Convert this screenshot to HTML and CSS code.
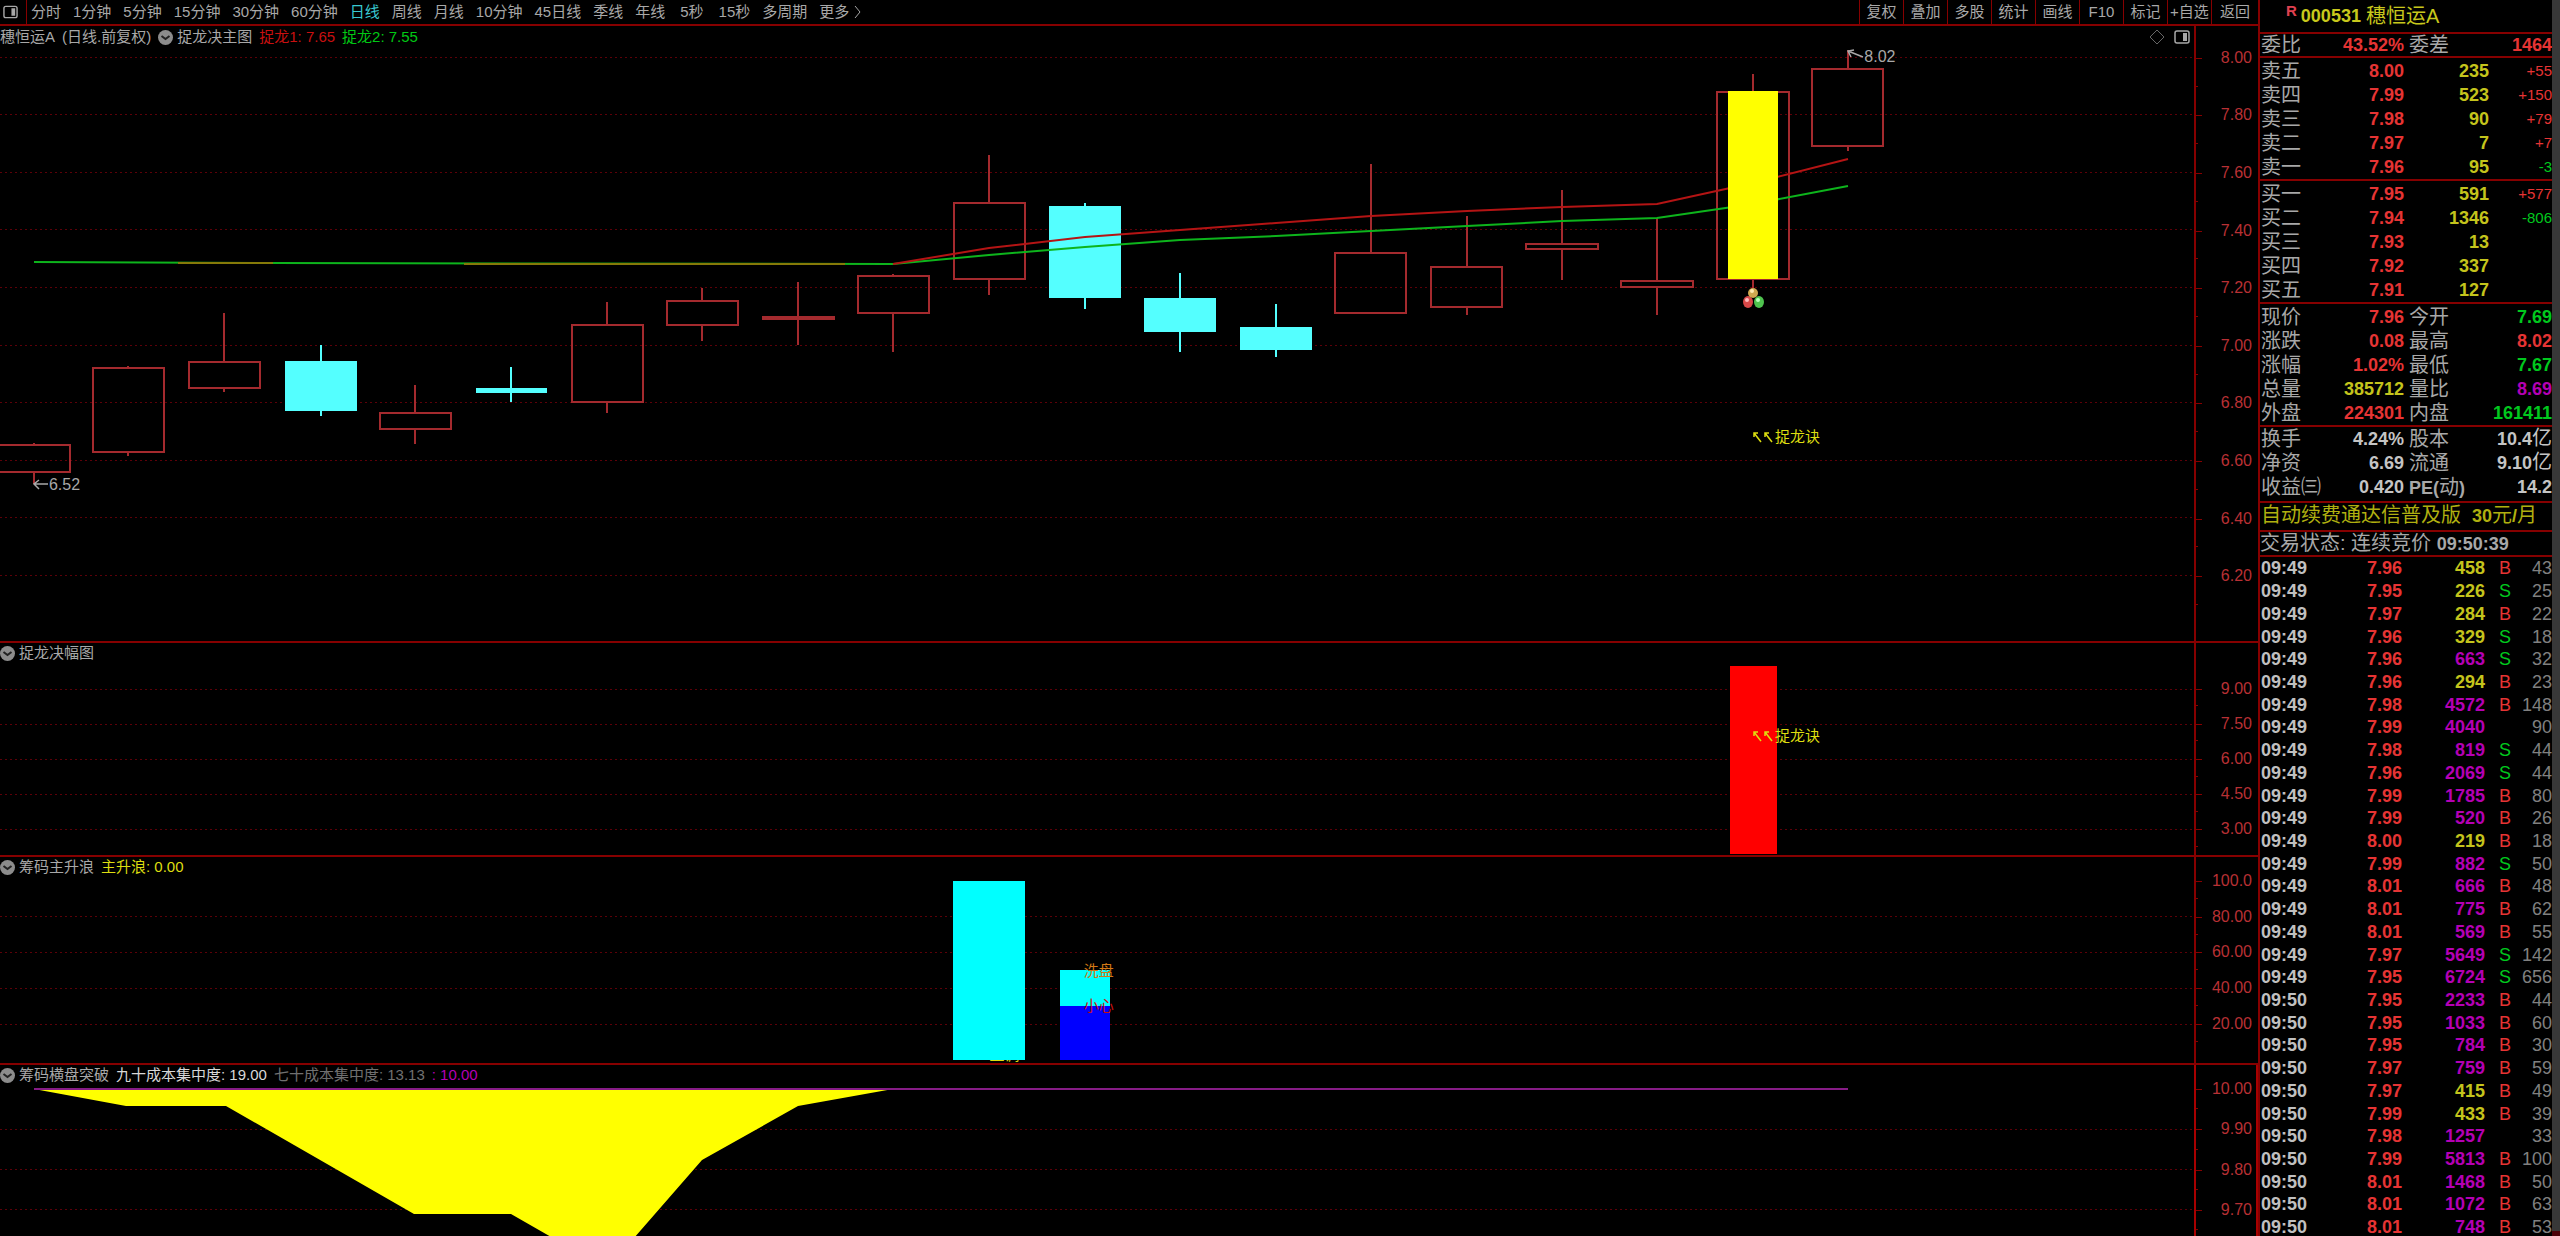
FILE: index.html
```html
<!DOCTYPE html>
<html lang="zh-CN">
<head>
<meta charset="utf-8">
<title>穗恒运A 000531 日线</title>
<link rel="stylesheet" href="styles.css">
</head>
<body>
<svg class="defs" aria-hidden="true">
  <symbol id="fold" viewBox="0 0 15 15"><circle cx="7.500" cy="7.500" r="7.500" fill="#8c8c8c"/><path d="M3.500 6l4 3 4-3" fill="none" stroke="#222" stroke-width="2"/></symbol>
  <symbol id="nw" viewBox="0 0 11 11"><path d="M1 5V1h4M1 1l7 9" fill="none" stroke="currentColor" stroke-width="1.500"/></symbol>
  <symbol id="pane" viewBox="0 0 16 14"><rect x="1" y="1" width="14" height="12" rx="2" fill="none" stroke="currentColor" stroke-width="1.500"/><path d="M9 3h4v8H9z" fill="currentColor"/></symbol>
</svg>
<main class="chart">
  <header class="toolbar">
    <button class="pane-btn" aria-label="侧栏"><svg width="15" height="14"><use href="#pane"/></svg></button>
    <nav class="periods">
      <button>分时</button><button>1分钟</button><button>5分钟</button><button>15分钟</button><button>30分钟</button><button>60分钟</button><button class="on">日线</button><button>周线</button><button>月线</button><button>10分钟</button><button>45日线</button><button>季线</button><button>年线</button><button class="sec">5秒</button><button class="sec">15秒</button><button>多周期</button><button class="more">更多<svg width="8" height="14" viewBox="0 0 8 14"><path d="M1 1l5 6-5 6" fill="none" stroke="currentColor"/></svg></button>
    </nav>
    <div class="tools">
      <button>复权</button><button>叠加</button><button>多股</button><button>统计</button><button>画线</button><button>F10</button><button>标记</button><button>+自选</button><button class="back">返回</button>
    </div>
  </header>
  <div class="panels">
    <section class="panel">
      <div class="plot">
        <svg class="canvas" viewBox="0 26 2194 615" preserveAspectRatio="none">
          <path class="grid" d="M0 57.500H2194M0 114.500H2194M0 172.500H2194M0 229.500H2194M0 287.500H2194M0 345.500H2194M0 402.500H2194M0 460.500H2194M0 517.500H2194M0 575.500H2194"/>
          <g class="up">
            <path d="M34 443v2M34 472v12M-2 445H70V472H-2z"/>
            <path d="M128 366v2M128 452v4M93 368H164V452H93z"/>
            <path d="M224 313v49M224 388v4M189 362H260V388H189z"/>
            <path d="M415 385v28M415 429v15M380 413H451V429H380z"/>
            <path d="M607 302v23M607 402v11M572 325H643V402H572z"/>
            <path d="M702 288v13M702 325v16M667 301H738V325H667z"/>
            <path d="M798 282v63M763 317H834V319H763z"/>
            <path d="M893 274v2M893 313v39M858 276H929V313H858z"/>
            <path d="M989 155v48M989 279v16M954 203H1025V279H954z"/>
            <path d="M1371 164v89M1335 253H1406V313H1335z"/>
            <path d="M1467 216v51M1467 307v8M1431 267H1502V307H1431z"/>
            <path d="M1562 190v54M1562 249v31M1526 244H1598V249H1526z"/>
            <path d="M1657 218v62M1657 287v28M1621 281H1693V287H1621z"/>
            <path d="M1753 74v17M1753 279v9M1717 92H1789V279H1717z"/>
            <path d="M1848 50v19M1848 146v5M1812 69H1883V146H1812z"/>
          </g>
          <g class="down">
            <path d="M320 345h2V361H357V411H322V416H320V411H285V361H320z"/>
            <path d="M510 367h2V388H547V393H512V402H510V393H476V388H510z"/>
            <path d="M1084 203h2V206H1121V298H1086V309H1084V298H1049V206H1084z"/>
            <path d="M1179 273h2V298H1216V332H1181V352H1179V332H1144V298H1179z"/>
            <path d="M1275 304h2V327H1312V350H1277V357H1275V350H1240V327H1275z"/>
          </g>
          <polyline class="ma-green" points="34,262 273,263 893,264 989,255 1085,247 1180,240 1276,236 1371,231 1467,226 1562,221 1657,218 1753,204 1848,186"/>
          <path class="ma-overlap" d="M178 263H273M464 264H845"/>
          <polyline class="ma-red" points="893,264 989,248 1085,237 1180,230 1276,223 1371,216 1467,211 1562,207 1657,204 1753,183 1848,159"/>
          <rect x="1728" y="91" width="50" height="188" fill="#ff0"/>
          <ellipse cx="1748" cy="302" rx="5" ry="6" fill="#d84848"/><ellipse cx="1759" cy="302" rx="5" ry="6" fill="#4fc44f"/><ellipse cx="1753" cy="293" rx="5" ry="5" fill="#d0a850"/>
          <circle cx="1747" cy="300" r="2" fill="#fbb"/><circle cx="1758" cy="300" r="2" fill="#bfb"/><circle cx="1752" cy="291" r="2" fill="#ffe9b0"/>
        </svg>
        <div class="title">
          <span>穗恒运A</span><span>(日线.前复权)</span>
          <button class="fold" aria-label="折叠"><svg width="15" height="15"><use href="#fold"/></svg></button>
          <span>捉龙决主图</span><span class="c-red">捉龙1: 7.65</span><span class="c-green">捉龙2: 7.55</span>
          <span class="corner"><svg width="16" height="16" viewBox="0 0 16 16"><path d="M8 1l7 7-7 7-7-7z" fill="none" stroke="#666"/></svg><svg width="16" height="14"><use href="#pane"/></svg></span>
        </div>
        <span class="note price" style="left:1.5%;top:74.6%"><svg width="16" height="12" viewBox="0 0 16 12"><path d="M15 5H1M6 1L1 5l5 5" fill="none" stroke="currentColor" stroke-width="1.500"/></svg>6.52</span>
        <span class="note price" style="left:84.2%;top:5.1%"><svg width="17" height="16" viewBox="0 0 17 16"><path d="M16 8L1 2M7 1L1 2l3 6" fill="none" stroke="currentColor" stroke-width="1.500"/></svg>8.02</span>
        <span class="note c-yellow" style="left:79.9%;top:66.9%"><svg width="11" height="11"><use href="#nw"/></svg><svg width="11" height="11"><use href="#nw"/></svg>捉龙诀</span>
      </div>
      <ol class="axis a1"><li>8.00</li><li>7.80</li><li>7.60</li><li>7.40</li><li>7.20</li><li>7.00</li><li>6.80</li><li>6.60</li><li>6.40</li><li>6.20</li></ol>
    </section>
    <section class="panel">
      <div class="plot">
        <svg class="canvas" viewBox="0 643 2194 212" preserveAspectRatio="none">
          <path class="grid" d="M0 689.500H2194M0 724.500H2194M0 759.500H2194M0 794.500H2194M0 829.500H2194"/>
          <rect x="1730" y="666" width="47" height="188" fill="#f00"/>
        </svg>
        <div class="title"><button class="fold" aria-label="折叠"><svg width="15" height="15"><use href="#fold"/></svg></button><span>捉龙决幅图</span></div>
        <span class="note c-yellow" style="left:79.9%;top:43.9%"><svg width="11" height="11"><use href="#nw"/></svg><svg width="11" height="11"><use href="#nw"/></svg>捉龙诀</span>
      </div>
      <ol class="axis a2"><li>9.00</li><li>7.50</li><li>6.00</li><li>4.50</li><li>3.00</li></ol>
    </section>
    <section class="panel">
      <div class="plot">
        <span class="note c-yellow" style="left:45.1%;top:96%">盘调</span>
        <svg class="canvas" viewBox="0 857 2194 206" preserveAspectRatio="none">
          <path class="grid" d="M0 916.500H2194M0 952.500H2194M0 988.500H2194M0 1024.500H2194"/>
          <rect x="953" y="881" width="72" height="179" fill="#0ff"/>
          <rect x="1060" y="970" width="50" height="36" fill="#0ff"/>
          <rect x="1060" y="1006" width="50" height="54" fill="#00f"/>
        </svg>
        <div class="title"><button class="fold" aria-label="折叠"><svg width="15" height="15"><use href="#fold"/></svg></button><span>筹码主升浪</span><span class="c-yellow">主升浪: 0.00</span></div>
        <span class="note c-orange" style="left:49.4%;top:55.2%">洗盘</span>
        <span class="note c-red" style="left:49.4%;top:72.5%">小心</span>
      </div>
      <ol class="axis a3"><li>100.0</li><li>80.00</li><li>60.00</li><li>40.00</li><li>20.00</li></ol>
    </section>
    <section class="panel">
      <div class="plot">
        <svg class="canvas" viewBox="0 1065 2194 171" preserveAspectRatio="none">
          <path class="grid" d="M0 1129.500H2194M0 1169.500H2194M0 1209.500H2194"/>
          <polygon fill="#ff0" points="34,1089 126,1106 226,1106 414,1214 511,1214 607,1269 702,1160 798,1106 893,1089"/>
          <path class="limit" d="M34 1089H1848"/>
        </svg>
        <div class="title"><button class="fold" aria-label="折叠"><svg width="15" height="15"><use href="#fold"/></svg></button><span>筹码横盘突破</span><span class="c-white">九十成本集中度: 19.00</span><span class="c-dim">七十成本集中度: 13.13</span><span class="c-magenta">: 10.00</span></div>
      </div>
      <ol class="axis a4"><li>10.00</li><li>9.90</li><li>9.80</li><li>9.70</li></ol>
    </section>
  </div>
</main>
<aside class="quote">
  <div class="info">
    <h1 class="stock"><sup>R</sup><b>000531</b><span>穗恒运A</span></h1>
    <dl class="pairs ratio"><dt>委比</dt><dd class="q-red">43.52%</dd><dt>委差</dt><dd class="q-red">1464</dd></dl>
    <table class="book">
      <tr><th>卖五</th><td>8.00</td><td>235</td><td class="q-red">+55</td></tr>
      <tr><th>卖四</th><td>7.99</td><td>523</td><td class="q-red">+150</td></tr>
      <tr><th>卖三</th><td>7.98</td><td>90</td><td class="q-red">+79</td></tr>
      <tr><th>卖二</th><td>7.97</td><td>7</td><td class="q-red">+7</td></tr>
      <tr><th>卖一</th><td>7.96</td><td>95</td><td class="q-green">-3</td></tr>
    </table>
    <table class="book">
      <tr><th>买一</th><td>7.95</td><td>591</td><td class="q-red">+577</td></tr>
      <tr><th>买二</th><td>7.94</td><td>1346</td><td class="q-green">-806</td></tr>
      <tr><th>买三</th><td>7.93</td><td>13</td><td></td></tr>
      <tr><th>买四</th><td>7.92</td><td>337</td><td></td></tr>
      <tr><th>买五</th><td>7.91</td><td>127</td><td></td></tr>
    </table>
    <dl class="pairs">
      <dt>现价</dt><dd class="q-red">7.96</dd><dt>今开</dt><dd class="q-green">7.69</dd>
      <dt>涨跌</dt><dd class="q-red">0.08</dd><dt>最高</dt><dd class="q-red">8.02</dd>
      <dt>涨幅</dt><dd class="q-red">1.02%</dd><dt>最低</dt><dd class="q-green">7.67</dd>
      <dt>总量</dt><dd class="q-yellow">385712</dd><dt>量比</dt><dd class="q-magenta">8.69</dd>
      <dt>外盘</dt><dd class="q-red">224301</dd><dt>内盘</dt><dd class="q-green">161411</dd>
    </dl>
    <dl class="pairs basics">
      <dt>换手</dt><dd>4.24%</dd><dt>股本</dt><dd>10.4<i>亿</i></dd>
      <dt>净资</dt><dd>6.69</dd><dt>流通</dt><dd>9.10<i>亿</i></dd>
      <dt>收益㈢</dt><dd>0.420</dd><dt><b>PE(</b>动<b>)</b></dt><dd>14.2</dd>
    </dl>
    <a class="promo" href="#">自动续费通达信普及版<span><b>30</b>元<b>/</b>月</span></a>
    <p class="state">交易状态: 连续竞价 <b>09:50:39</b></p>
    <div class="tape">
      <table class="ticks">
        <tr><td>09:49</td><td>7.96</td><td>458</td><td class="b">B</td><td>43</td></tr>
        <tr><td>09:49</td><td>7.95</td><td>226</td><td class="s">S</td><td>25</td></tr>
        <tr><td>09:49</td><td>7.97</td><td>284</td><td class="b">B</td><td>22</td></tr>
        <tr><td>09:49</td><td>7.96</td><td>329</td><td class="s">S</td><td>18</td></tr>
        <tr><td>09:49</td><td>7.96</td><td class="big">663</td><td class="s">S</td><td>32</td></tr>
        <tr><td>09:49</td><td>7.96</td><td>294</td><td class="b">B</td><td>23</td></tr>
        <tr><td>09:49</td><td>7.98</td><td class="big">4572</td><td class="b">B</td><td>148</td></tr>
        <tr><td>09:49</td><td>7.99</td><td class="big">4040</td><td></td><td>90</td></tr>
        <tr><td>09:49</td><td>7.98</td><td class="big">819</td><td class="s">S</td><td>44</td></tr>
        <tr><td>09:49</td><td>7.96</td><td class="big">2069</td><td class="s">S</td><td>44</td></tr>
        <tr><td>09:49</td><td>7.99</td><td class="big">1785</td><td class="b">B</td><td>80</td></tr>
        <tr><td>09:49</td><td>7.99</td><td class="big">520</td><td class="b">B</td><td>26</td></tr>
        <tr><td>09:49</td><td>8.00</td><td>219</td><td class="b">B</td><td>18</td></tr>
        <tr><td>09:49</td><td>7.99</td><td class="big">882</td><td class="s">S</td><td>50</td></tr>
        <tr><td>09:49</td><td>8.01</td><td class="big">666</td><td class="b">B</td><td>48</td></tr>
        <tr><td>09:49</td><td>8.01</td><td class="big">775</td><td class="b">B</td><td>62</td></tr>
        <tr><td>09:49</td><td>8.01</td><td class="big">569</td><td class="b">B</td><td>55</td></tr>
        <tr><td>09:49</td><td>7.97</td><td class="big">5649</td><td class="s">S</td><td>142</td></tr>
        <tr><td>09:49</td><td>7.95</td><td class="big">6724</td><td class="s">S</td><td>656</td></tr>
        <tr><td>09:50</td><td>7.95</td><td class="big">2233</td><td class="b">B</td><td>44</td></tr>
        <tr><td>09:50</td><td>7.95</td><td class="big">1033</td><td class="b">B</td><td>60</td></tr>
        <tr><td>09:50</td><td>7.95</td><td class="big">784</td><td class="b">B</td><td>30</td></tr>
        <tr><td>09:50</td><td>7.97</td><td class="big">759</td><td class="b">B</td><td>59</td></tr>
        <tr><td>09:50</td><td>7.97</td><td>415</td><td class="b">B</td><td>49</td></tr>
        <tr><td>09:50</td><td>7.99</td><td>433</td><td class="b">B</td><td>39</td></tr>
        <tr><td>09:50</td><td>7.98</td><td class="big">1257</td><td></td><td>33</td></tr>
        <tr><td>09:50</td><td>7.99</td><td class="big">5813</td><td class="b">B</td><td>100</td></tr>
        <tr><td>09:50</td><td>8.01</td><td class="big">1468</td><td class="b">B</td><td>50</td></tr>
        <tr><td>09:50</td><td>8.01</td><td class="big">1072</td><td class="b">B</td><td>63</td></tr>
        <tr><td>09:50</td><td>8.01</td><td class="big">748</td><td class="b">B</td><td>53</td></tr>
      </table>
    </div>
  </div>
  <div class="edge"></div>
</aside>
</body>
</html>
```
FILE: styles.css
```css
:root {
  --line: #860000;
  --text: #a8a8a8;
  --red: #e63434;
  --green: #00c81e;
  --yellow: #c4c41c;
  --magenta: #b400b4;
}

* { box-sizing: border-box; margin: 0; padding: 0; }

body {
  display: flex;
  height: 100vh;
  overflow: hidden;
  background: #000;
  color: var(--text);
  font: 15px/20px "Liberation Sans", "Noto Sans CJK SC", sans-serif;
}

button {
  background: none;
  border: 0;
  color: inherit;
  font: inherit;
  cursor: pointer;
  white-space: nowrap;
}

svg { flex: none; }
.defs { position: absolute; width: 0; height: 0; }

/* chart column */
.chart { flex: 1; min-width: 0; display: flex; flex-direction: column; }

.toolbar {
  display: flex;
  height: 26px;
  border-bottom: 2px solid var(--line);
  line-height: 24px;
}
.pane-btn { display: flex; align-items: center; width: 27px; padding-left: 3px; border-right: 1px solid var(--line); }
.periods { flex: 1; min-width: 0; display: flex; gap: 12px; padding-left: 4px; overflow: hidden; }
.periods .on { color: #38c8d0; }
.periods .sec { padding-left: 3px; }
.periods .more { display: flex; align-items: center; gap: 5px; }
.tools { display: flex; }
.tools button { width: 44px; border-left: 1px solid var(--line); }
.tools .back { width: 47px; }

.panels {
  flex: 1;
  min-height: 0;
  display: grid;
  grid-template-rows: minmax(0, 615fr) minmax(0, 214fr) minmax(0, 208fr) minmax(0, 173fr);
}
.panel { display: flex; min-width: 0; border-top: 2px solid var(--line); }
.panel:first-child { border-top: 0; }

.plot { position: relative; flex: 1; min-width: 0; overflow: hidden; }
.canvas { position: absolute; inset: 0; width: 100%; height: 100%; }
.canvas path, .canvas polyline { vector-effect: non-scaling-stroke; }

.grid { stroke: #5c0008; stroke-width: 1; stroke-dasharray: 2 3; fill: none; }
.up { stroke: #a42a2e; stroke-width: 2; fill: none; }
.down { fill: #54ffff; }
.ma-green { stroke: #0db41c; stroke-width: 2; fill: none; }
.ma-red { stroke: #b41414; stroke-width: 2; fill: none; }
.ma-overlap { stroke: #857a08; stroke-width: 2; fill: none; }
.limit { stroke: #861c86; stroke-width: 2; fill: none; }

.title { position: relative; display: flex; align-items: center; gap: 7px; height: 20px; white-space: nowrap; }
.panel:first-child .title { height: 22px; }
.title .fold { display: flex; margin-right: -3px; }
.corner { display: flex; align-items: center; gap: 9px; margin-left: auto; padding-right: 4px; }

.note { position: absolute; display: flex; align-items: center; transform: translateY(-50%); white-space: nowrap; }
.price { font-size: 16px; }

.c-red { color: #c81010; }
.c-green { color: #00c814; }
.c-yellow { color: #dede10; }
.c-orange { color: #d27814; }
.c-white { color: #d8d8d8; }
.c-dim { color: #707070; }
.c-magenta { color: #b400b4; }

.axis {
  display: flex;
  flex-direction: column;
  width: 64px;
  border-left: 2px solid var(--line);
  list-style: none;
  color: #b83034;
  font-size: 16px;
}
.axis li {
  position: relative;
  flex: 1;
  display: flex;
  align-items: center;
  justify-content: flex-end;
  padding-right: 6px;
}
.axis li::before, .axis li::after { content: ""; position: absolute; left: 0; height: 1px; background: var(--line); }
.axis li::before { top: 50%; width: 6px; }
.axis li::after { bottom: 0; width: 2px; }
.a1 { padding: 3px 0 36px; }
.a2 { padding: 28px 0 8px; }
.a3 { padding: 6px 0 21px; }
.a4 { padding: 4px 0 6px; border-left-color: #a80000; border-right: 2px solid #a80000; }
.a4 li { padding-right: 4px; }

/* quote column */
.quote { display: flex; width: 302px; border-left: 2px solid var(--line); }
.info { flex: 1; min-width: 0; display: flex; flex-direction: column; }
.info > * { flex: none; border-bottom: 2px solid var(--line); }
.edge { width: 8px; background: #383838; border-bottom: 5px solid #4c0008; }

.quote b, .quote dd { font-size: 18px; font-weight: bold; }

.stock { display: flex; align-items: center; height: 34px; padding-left: 26px; color: #c8c81c; font-size: 20px; font-weight: normal; }
.stock sup { margin: 0 4px 10px 0; color: #e04050; font-size: 15px; font-weight: bold; line-height: 16px; }
.stock b { margin-right: 5px; }

.pairs, .book, .promo, .state { font-size: 20px; line-height: 24px; }
.pairs { display: grid; grid-template-columns: 64px 80px 68px 1fr; padding-top: 1px; }
.pairs dt { padding-left: 1px; white-space: nowrap; }
.pairs dt:nth-of-type(even) { padding-left: 5px; }
.pairs dd { text-align: right; color: #c4c4c4; white-space: nowrap; }
.pairs i { font-size: 20px; font-style: normal; font-weight: normal; line-height: 20px; }
.ratio { padding: 0; line-height: 22px; }
.basics { padding: 0 0 1px; }

.book, .book tbody { display: block; }
.book { padding-top: 1px; }
.book tr { display: grid; grid-template-columns: 64px 80px 85px 1fr; }
.book th { padding-left: 1px; font-weight: normal; text-align: left; }
.book td { height: 24px; text-align: right; color: var(--red); font-size: 18px; font-weight: bold; }
.book td:nth-child(3) { color: var(--yellow); }
.book td:nth-child(4) { font-size: 15px; font-weight: normal; }

.info .q-red { color: var(--red); }
.info .q-green { color: var(--green); }
.info .q-yellow { color: var(--yellow); }
.info .q-magenta { color: var(--magenta); }

.promo { display: flex; justify-content: space-between; height: 29px; padding: 0 15px 0 1px; color: #b0b010; text-decoration: none; white-space: nowrap; }
.state { height: 25px; line-height: 22px; white-space: nowrap; }

.info .tape { flex: 1; min-height: 0; border: 0; }
.ticks { width: 100%; height: calc(100% + 3px); border-spacing: 0; table-layout: fixed; font-size: 18px; font-weight: bold; line-height: 20px; }
.ticks td { text-align: right; }
.ticks td:nth-child(1) { width: 62px; padding-left: 1px; text-align: left; color: #c0c0c0; }
.ticks td:nth-child(2) { width: 80px; color: var(--red); }
.ticks td:nth-child(3) { width: 83px; color: var(--yellow); }
.ticks td:nth-child(4) { width: 26px; font-weight: normal; }
.ticks td:nth-child(5) { color: #808080; font-weight: normal; }
.ticks .b { color: var(--red); }
.ticks .s { color: var(--green); }
.ticks td.big { color: var(--magenta); }
```
